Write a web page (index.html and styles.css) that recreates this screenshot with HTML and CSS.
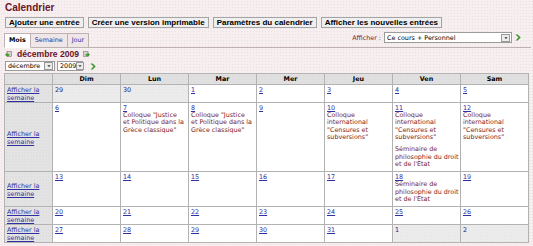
FILE: index.html
```html
<!DOCTYPE html>
<html lang="fr">
<head>
<meta charset="utf-8">
<title>Calendrier</title>
<link rel="stylesheet" href="styles.css">
</head>
<body>
<div class="page">
  <h1 class="title">Calendrier</h1>
  <div class="toolbar">
    <button class="btn">Ajouter une entrée</button>
    <button class="btn">Créer une version imprimable</button>
    <button class="btn">Paramètres du calendrier</button>
    <button class="btn">Afficher les nouvelles entrées</button>
  </div>
  <div class="tabbar">
    <div class="tabs">
      <a class="tab active">Mois</a><a class="tab">Semaine</a><a class="tab">Jour</a>
    </div>
    <div class="filter">
      <span class="filter-label">Afficher :</span>
      <span class="select select-filter"><span class="select-value">Ce cours + Personnel</span><span class="select-btn"><svg viewBox="0 0 7 7" width="7" height="7"><path d="M1.5 2.5h4L3.5 4.8z" fill="#333"/></svg></span></span>
      <svg class="go" viewBox="0 0 6 7" width="6" height="7"><path d="M0.5 0.5h2.2l3 3-3 3H0.5l3-3z" fill="#3c9a2c"/></svg>
    </div>
  </div>
  <div class="month-head">
    <svg class="nav-ico" viewBox="0 0 7 7" width="7" height="7"><rect x="2" y="0.5" width="4.5" height="5" fill="#d8d0d0" stroke="#a06060" stroke-width="0.6"/><path d="M0 3.8l2.4-2.3v1.4h2v1.8h-2v1.4z" fill="#3c9a2c"/></svg>
    <span class="month-title">décembre 2009</span>
    <svg class="nav-ico" viewBox="0 0 7 7" width="7" height="7"><rect x="0.5" y="0.5" width="4.5" height="5" fill="#d8d0d0" stroke="#808080" stroke-width="0.6"/><path d="M7 3.8L4.6 1.5v1.4h-2v1.8h2v1.4z" fill="#3c9a2c"/></svg>
  </div>
  <div class="month-nav">
    <span class="select select-month"><span class="select-value">décembre</span><span class="select-btn"><svg viewBox="0 0 7 7" width="7" height="7"><path d="M1.5 2.5h4L3.5 4.8z" fill="#333"/></svg></span></span>
    <span class="select select-year"><span class="select-value">2009</span><span class="select-btn"><svg viewBox="0 0 7 7" width="7" height="7"><path d="M1.5 2.5h4L3.5 4.8z" fill="#333"/></svg></span></span>
    <svg class="go go-month" viewBox="0 0 6 7" width="6" height="7"><path d="M0.5 0.5h2.2l3 3-3 3H0.5l3-3z" fill="#3c9a2c"/></svg>
  </div>
  <table class="cal">
    <colgroup>
      <col class="col-week"><col><col><col><col><col><col><col>
    </colgroup>
    <thead>
      <tr><th class="corner"></th><th>Dim</th><th>Lun</th><th>Mar</th><th>Mer</th><th>Jeu</th><th>Ven</th><th>Sam</th></tr>
    </thead>
    <tbody>
      <tr>
        <td class="week"><a href="#">Afficher la semaine</a></td>
        <td class="day out"><span class="num">29</span></td>
        <td class="day out"><span class="num">30</span></td>
        <td class="day"><a class="num" href="#">1</a></td>
        <td class="day"><a class="num" href="#">2</a></td>
        <td class="day"><a class="num" href="#">3</a></td>
        <td class="day"><a class="num" href="#">4</a></td>
        <td class="day"><a class="num" href="#">5</a></td>
      </tr>
      <tr>
        <td class="week"><a href="#">Afficher la semaine</a></td>
        <td class="day"><a class="num" href="#">6</a></td>
        <td class="day"><a class="num" href="#">7</a><div class="event">Colloque "Justice<br>et Politique dans la<br>Grèce classique"</div></td>
        <td class="day"><a class="num" href="#">8</a><div class="event">Colloque "Justice<br>et Politique dans la<br>Grèce classique"</div></td>
        <td class="day"><a class="num" href="#">9</a></td>
        <td class="day"><a class="num" href="#">10</a><div class="event">Colloque<br>international<br>"Censures et<br>subversions"</div></td>
        <td class="day"><a class="num" href="#">11</a><div class="event">Colloque<br>international<br>"Censures et<br>subversions"</div><div class="event">Séminaire de<br>philosophie du droit<br>et de l'Etat</div></td>
        <td class="day"><a class="num" href="#">12</a><div class="event">Colloque<br>international<br>"Censures et<br>subversions"</div></td>
      </tr>
      <tr>
        <td class="week"><a href="#">Afficher la semaine</a></td>
        <td class="day"><a class="num" href="#">13</a></td>
        <td class="day"><a class="num" href="#">14</a></td>
        <td class="day"><a class="num" href="#">15</a></td>
        <td class="day"><a class="num" href="#">16</a></td>
        <td class="day"><a class="num" href="#">17</a></td>
        <td class="day"><a class="num" href="#">18</a><div class="event">Séminaire de<br>philosophie du droit<br>et de l'Etat</div></td>
        <td class="day"><a class="num" href="#">19</a></td>
      </tr>
      <tr>
        <td class="week"><a href="#">Afficher la semaine</a></td>
        <td class="day"><a class="num" href="#">20</a></td>
        <td class="day"><a class="num" href="#">21</a></td>
        <td class="day"><a class="num" href="#">22</a></td>
        <td class="day"><a class="num" href="#">23</a></td>
        <td class="day"><a class="num" href="#">24</a></td>
        <td class="day"><a class="num" href="#">25</a></td>
        <td class="day"><a class="num" href="#">26</a></td>
      </tr>
      <tr>
        <td class="week"><a href="#">Afficher la semaine</a></td>
        <td class="day"><a class="num" href="#">27</a></td>
        <td class="day"><a class="num" href="#">28</a></td>
        <td class="day"><a class="num" href="#">29</a></td>
        <td class="day"><a class="num" href="#">30</a></td>
        <td class="day"><a class="num" href="#">31</a></td>
        <td class="day out"><span class="num">1</span></td>
        <td class="day out"><span class="num">2</span></td>
      </tr>
    </tbody>
  </table>
</div>
</body>
</html>
```
FILE: styles.css
```css
* { box-sizing: border-box; }

body {
  margin: 0;
  background-color: #f7eef0;
  background-image: radial-gradient(circle, #eadfe2 0.6px, transparent 0.8px);
  background-size: 3px 3px;
  font-family: "DejaVu Sans", Verdana, sans-serif;
  font-size: 6.4px;
  color: #000;
}

.page {
  padding-top: 2px;
}

.title {
  margin: 0 0 0 5px;
  font-family: "Liberation Sans", Arial, sans-serif;
  font-size: 10px;
  line-height: 12px;
  font-weight: bold;
  color: #6b1426;
}

.toolbar {
  display: flex;
  gap: 4px;
  margin: 3px 0 0 5px;
}

.btn {
  font: bold 8px/9px "Liberation Sans", Arial, sans-serif;
  height: 11px;
  padding: 0 3px;
  border: 1px solid #a4a4a4;
  background: #efefef;
  color: #000;
}

.tabbar {
  display: flex;
  justify-content: space-between;
  align-items: flex-start;
  height: 16px;
  margin: 4px 2px 0 4px;
  border-bottom: 1px solid #bfb0b4;
}

.tabs {
  display: flex;
  align-self: flex-end;
  margin-bottom: -1px;
}

.tab {
  display: block;
  height: 15px;
  padding: 0 4px;
  line-height: 13px;
  color: #3030a0;
  background: #efe6e8;
  border: 1px solid #bfb0b4;
  border-left: none;
}

.tab.active {
  color: #000;
  font-weight: bold;
  background: #fff;
  border-left: 1px solid #bfb0b4;
  border-bottom-color: #fff;
}

.filter {
  display: flex;
  align-items: center;
  height: 11px;
  gap: 3px;
  margin-right: 10px;
}

.filter-label {
  color: #7d1b1b;
}

.select {
  display: flex;
  align-items: center;
  background: #fff;
  border: 1px solid #9c9c9c;
  color: #000;
}

.select-value {
  flex: 1;
  padding-left: 2px;
  white-space: nowrap;
}

.select-btn {
  display: flex;
  align-items: center;
  justify-content: center;
  width: 9px;
  height: 8px;
  margin-right: 1px;
  border: 1px solid #9a9a9a;
  background: #ececec;
}

.select-btn svg {
  width: 6px;
  height: 6px;
}

.select-filter {
  width: 128px;
  height: 11px;
}

.go {
  display: block;
}

.month-head {
  display: flex;
  align-items: center;
  gap: 3px;
  height: 10px;
  margin: 1px 0 0 5px;
}

.nav-ico {
  display: block;
}

.month-title {
  font-family: "Liberation Sans", Arial, sans-serif;
  font-size: 8.6px;
  font-weight: bold;
  color: #6b1426;
  margin: 0 1px 0 2px;
}

.month-nav {
  display: flex;
  align-items: center;
  gap: 2px;
  margin: 2px 0 0 5px;
}

.select-month {
  width: 50px;
  height: 10px;
}

.select-year {
  width: 26px;
  height: 10px;
}

.go-month {
  margin-left: 5px;
}

.cal {
  margin: 2px 0 0 4px;
  border-collapse: collapse;
  table-layout: fixed;
  width: 524px;
  border: 1px solid #b2b2b2;
}

.cal col {
  width: 68px;
}

.cal col.col-week {
  width: 48px;
}

.cal th,
.cal td {
  border: 1px solid #b2b2b2;
}

.cal th {
  padding: 0;
  line-height: 10px;
  font-weight: bold;
  text-align: center;
  background-color: #e1e1e1;
  background-image: radial-gradient(circle, #d2d2d2 0.6px, transparent 0.8px);
  background-size: 3px 3px;
}

.week {
  padding: 1px 1px 0 2px;
  line-height: 8px;
  vertical-align: middle;
  background-color: #e4e4e4;
  background-image: radial-gradient(circle, #d4d4d4 0.6px, transparent 0.8px);
  background-size: 3px 3px;
}

.week a {
  color: #3030a0;
}

.day {
  padding: 2px 1px 3px 2px;
  vertical-align: top;
  background: #fff;
}

.day.out {
  background-color: #ececec;
  background-image: radial-gradient(circle, #e0e0e0 0.6px, transparent 0.8px);
  background-size: 3px 3px;
}

.num {
  display: block;
  width: fit-content;
  line-height: 7px;
  color: #3030a0;
}

.out .num {
  color: #202080;
}

.event {
  line-height: 7.33px;
  color: #7d1b1b;
  white-space: nowrap;
}

.event + .event {
  margin-top: 5px;
}
```
